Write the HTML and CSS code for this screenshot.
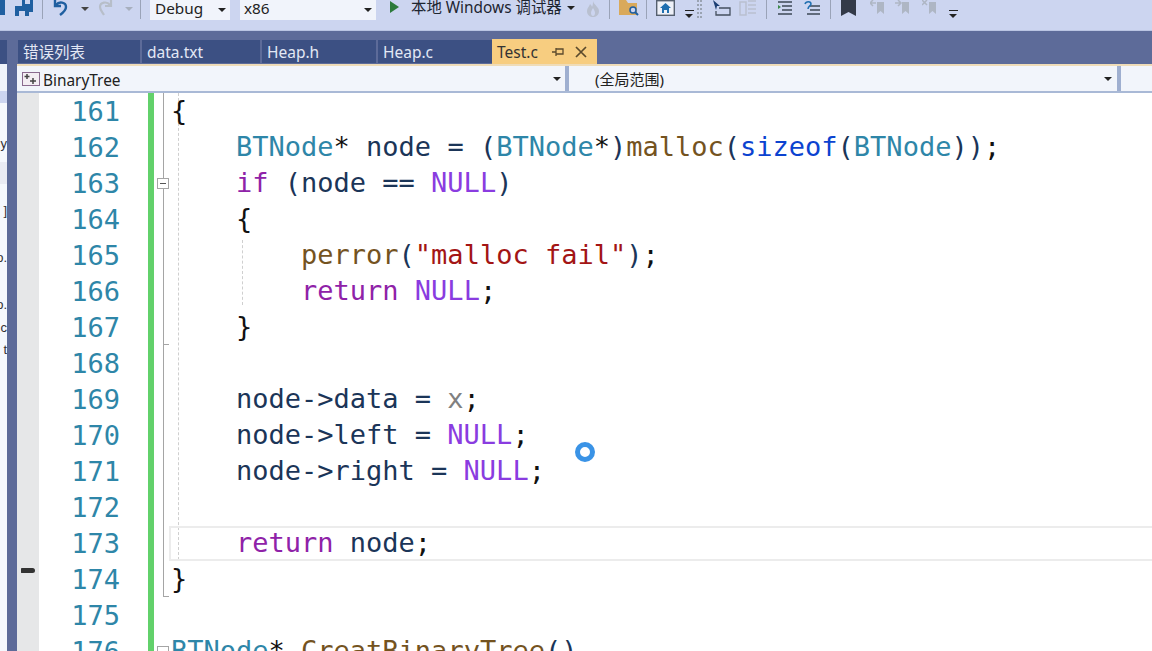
FILE: index.html
```html
<!DOCTYPE html>
<html lang="zh">
<head>
<meta charset="utf-8">
<title>Test.c</title>
<link rel="stylesheet" href="styles.css">
</head>
<body>
<header class="toolbar">
  <svg class="ico save" width="34" height="17" viewBox="0 0 34 17"><path d="M0 0h5v15H0z" fill="#1f5fa0"/><path d="M22 0h11v12H22z" fill="#1f5fa0"/><rect x="25" y="0" width="5" height="4" fill="#ccd5f0"/><path d="M15 6h14v10H15z" fill="#1f5fa0"/><rect x="19" y="11" width="6" height="5" fill="#ccd5f0"/></svg>
  <i class="sep s1"></i>
  <svg class="ico undo" width="16" height="16" viewBox="0 0 16 16"><path d="M2 0v6h6M3 5c3-4 10-3 10 2 0 3-2 5-6 8" fill="none" stroke="#1f5fa0" stroke-width="2.400"/></svg>
  <i class="arrow a-undo"></i>
  <svg class="ico redo" width="16" height="16" viewBox="0 0 16 16"><path d="M14 0v6H8M13 5C10 1 3 2 3 7c0 3 2 5 4 8" fill="none" stroke="#b7bec9" stroke-width="2.200"/></svg>
  <i class="arrow off a-redo"></i>
  <i class="sep s2"></i>
  <div class="combo debug"><span>Debug</span><i class="arrow"></i></div>
  <div class="combo x86"><span>x86</span><i class="arrow"></i></div>
  <i class="play"></i>
  <span class="run">本地 Windows 调试器</span>
  <i class="arrow a-run"></i>
  <svg class="ico flame" width="14" height="16" viewBox="0 0 14 16"><path d="M7 0c1 4 6 6 6 10 0 4-3 6-6 6s-6-2-6-6c0-3 2-4 3-7 1 1 2 2 2 3 1-2 1-4 1-6z" fill="#b9c0d0"/><path d="M7 7c1 2 2 3 2 5s-1 3-2 3-2-1-2-3 1-3 2-5z" fill="#ccd5f0"/></svg>
  <i class="sep s3"></i>
  <svg class="ico folder" width="20" height="16" viewBox="0 0 20 16"><path d="M0 0h7l2 3h9v12H0z" fill="#d9a95b"/><circle cx="14" cy="10" r="3" fill="#ccd5f0" stroke="#1f5fa0" stroke-width="1.500"/><path d="M16 12l3 3" stroke="#1f5fa0" stroke-width="2"/></svg>
  <i class="sep s4"></i>
  <svg class="ico home" width="19" height="16" viewBox="0 0 19 16"><rect x=".7" y=".7" width="17.600" height="14.600" fill="#eef1f8" stroke="#55606f" stroke-width="1.400"/><path d="M9.500 3L4 8h2v5h7V8h2z" fill="#1f6fb0"/><rect x="8" y="10" width="3" height="3" fill="#eef1f8"/></svg>
  <i class="more m1"></i>
  <svg class="ico grip" width="8" height="19" viewBox="0 0 8 19"><path d="M1 1h6M1 5h6M1 9h6M1 13h6M1 17h6" stroke="#9aa3b2" stroke-width="2" stroke-dasharray="2 1"/></svg>
  <svg class="ico cursor" width="18" height="16" viewBox="0 0 18 16"><path d="M0 0l7 6H4l-1 4z" fill="#1d3f73"/><path d="M6 8h11v7H3v-4" fill="none" stroke="#444f5e" stroke-width="1.300"/></svg>
  <svg class="ico faded" width="18" height="16" viewBox="0 0 18 16"><path d="M1 2h6v13H1zM9 1h8M9 5h8M9 9h8M9 13h8" fill="none" stroke="#b9c0cf" stroke-width="1.500"/></svg>
  <i class="sep s5"></i>
  <svg class="ico lines" width="14" height="14" viewBox="0 0 14 14"><path d="M0 1h14M4 5h10M4 9h10M0 13h14" stroke="#3d4856" stroke-width="1.500"/><path d="M0 4l3 2-3 2z" fill="#3c8a4b"/></svg>
  <svg class="ico lines2" width="16" height="15" viewBox="0 0 16 15"><path d="M6 5h10M6 9h10M3 13h13" stroke="#3d4856" stroke-width="1.500"/><path d="M1 3c1-3 6-3 6 0 0 2-3 2-3 5" fill="none" stroke="#1f6fb0" stroke-width="1.500"/></svg>
  <i class="sep s6"></i>
  <svg class="ico mark" width="15" height="16" viewBox="0 0 15 16"><path d="M0 0h15v16l-7.500-4L0 16z" fill="#333a48"/></svg>
  <svg class="ico m2" width="15" height="15" viewBox="0 0 15 15"><path d="M7 2h7v12l-3.500-3L7 14z" fill="#aeb6c4"/><path d="M6 3H1M3 0L0 3l3 3" fill="none" stroke="#aeb6c4" stroke-width="1.500"/></svg>
  <svg class="ico m3" width="15" height="15" viewBox="0 0 15 15"><path d="M7 2h7v12l-3.500-3L7 14z" fill="#aeb6c4"/><path d="M0 3h5M3 0l3 3-3 3" fill="none" stroke="#aeb6c4" stroke-width="1.500"/></svg>
  <svg class="ico m4" width="15" height="15" viewBox="0 0 15 15"><path d="M7 2h7v12l-3.500-3L7 14z" fill="#aeb6c4"/><path d="M0 0l5 5M5 0L0 5" fill="none" stroke="#aeb6c4" stroke-width="1.500"/></svg>
  <i class="more m5"></i>
</header>
<div class="workspace">
  <aside class="side">
    <div class="side-tab"></div>
    <div class="side-body">
      <i class="side-head"></i>
      <i class="side-combo"></i>
      <i class="side-band"></i>
      <span class="c2">y</span><span class="c3">]</span><span class="c4">o.</span><span class="c5">o.</span><span class="c6">c</span><span class="c7">t</span>
    </div>
  </aside>
  <main class="doc">
    <nav class="tabs">
      <div class="tab t1">错误列表</div>
      <div class="tab t2">data.txt</div>
      <div class="tab t3">Heap.h</div>
      <div class="tab t4">Heap.c</div>
      <div class="tab active"><span>Test.c</span>
        <svg class="pin" width="12" height="10" viewBox="0 0 12 10"><path d="M0 5h4M4 1v8M4 2h7v5H4" fill="none" stroke="#5b4a2c" stroke-width="1.300"/></svg>
        <svg class="close" width="12" height="12" viewBox="0 0 12 12"><path d="M1 1l10 10M11 1L1 11" stroke="#5b4a2c" stroke-width="1.700"/></svg>
      </div>
    </nav>
    <div class="navbar">
      <div class="nav-a">
        <svg width="18" height="14" viewBox="0 0 18 14"><rect x=".5" y=".5" width="17" height="13" fill="#f3edf3" stroke="#8a6a8f"/><path d="M5 2v5M2.500 4.500h5M11 6v6M8 9h6" stroke="#444" stroke-width="1.500"/></svg>
        <span class="nav-label">BinaryTree</span><i class="arrow"></i>
      </div>
      <i class="nav-div"></i>
      <div class="nav-b"><span>(全局范围)</span><i class="arrow"></i></div>
      <i class="nav-div"></i>
    </div>
    <div class="editor">
      <div class="marks"><i class="caret-mark"></i></div>
      <div class="nums">
        <div>161</div><div>162</div><div>163</div><div>164</div><div>165</div><div>166</div><div>167</div><div>168</div><div>169</div><div>170</div><div>171</div><div>172</div><div>173</div><div>174</div><div>175</div><div>176</div>
      </div>
      <div class="change"></div>
      <div class="code">
        <i class="outline"></i>
        <i class="tick k1"></i><i class="tick k2nd"></i>
        <i class="fold f1"></i><i class="fold f2"></i>
        <i class="guide g1"></i><i class="guide g2"></i>
        <i class="current"></i>
<pre><span class="p">{</span>
    <span class="t">BTNode</span><span class="p">*</span> node = (<span class="t">BTNode</span><span class="p">*</span>)<span class="f">malloc</span>(<span class="k2">sizeof</span>(<span class="t">BTNode</span>))<span class="p">;</span>
    <span class="k">if</span> (node == <span class="m">NULL</span>)
    <span class="p">{</span>
        <span class="f">perror</span>(<span class="s">"malloc fail"</span>)<span class="p">;</span>
        <span class="k">return</span> <span class="m">NULL</span><span class="p">;</span>
    <span class="p">}</span>

    node-&gt;data = <span class="g">x</span><span class="p">;</span>
    node-&gt;left = <span class="m">NULL</span><span class="p">;</span>
    node-&gt;right = <span class="m">NULL</span><span class="p">;</span>

    <span class="k">return</span> node<span class="p">;</span>
<span class="p">}</span>

<span class="t">BTNode</span><span class="p">*</span> <span class="f">CreatBinaryTree</span>()</pre>
      </div>
      <i class="spinner"></i>
    </div>
  </main>
</div>
</body>
</html>
```
FILE: styles.css
```css
* { box-sizing: border-box; }
html, body { margin: 0; height: 651px; overflow: hidden; }
body { width: 1152px; background: #5d6b99; font-family: "Noto Sans", "Noto Sans CJK SC", sans-serif; display: flex; flex-direction: column; }
i { display: block; flex: none; }
.toolbar { height: 31px; flex: none; background: #ccd5f0; display: flex; align-items: flex-start; overflow: hidden; box-shadow: inset 0 -1px 0 #b9c4e2; }
.ico { flex: none; }
.sep { width: 1px; height: 19px; background: #9aa3b8; }
.arrow { width: 0; height: 0; border: 4px solid transparent; border-top: 4px solid #222; border-bottom: 0; }
.arrow.off { border-top-color: #a7afbe; }
.s1 { margin-left: 8px; }
.undo { margin-left: 10px; }
.a-undo { margin: 7px 0 0 12px; border-top-color: #444; }
.redo { margin-left: 8px; }
.a-redo { margin: 7px 0 0 12px; }
.s2 { margin-left: 7px; }
.combo { height: 20px; background: #f1f4fb; display: flex; align-items: center; color: #222; font-size: 15.300px; }
.combo span { padding-bottom: 4px; }
.combo .arrow { margin-left: auto; }
.debug { width: 80px; margin-left: 9px; padding: 0 4px 0 5px; }
.x86 { width: 136px; margin-left: 10px; padding: 0 4px 0 4px; }
.play { width: 0; height: 0; margin: 1px 0 0 14px; border: 6px solid transparent; border-left: 9px solid #2c7a3b; border-right: 0; }
.run { width: 151px; flex: none; margin-left: 12px; font-size: 15.400px; line-height: 16px; color: #1e2530; white-space: nowrap; }
.a-run { margin: 6px 0 0 5px; }
.flame { margin: 1px 0 0 11px; }
.s3 { margin-left: 9px; }
.folder { margin-left: 9px; }
.s4 { margin-left: 7px; }
.home { margin-left: 9px; }
.more { width: 9px; height: 8px; margin: 10px 0 0 10px; border-top: 1px solid #222; position: relative; }
.more::after { content: ""; position: absolute; left: 0; top: 3px; border: 4.500px solid transparent; border-top: 4.500px solid #222; border-bottom: 0; }
.grip { margin-left: 2px; }
.cursor { margin-left: 9px; }
.faded { margin-left: 8px; }
.s5 { margin-left: 9px; }
.lines { margin: 1px 0 0 11px; }
.lines2 { margin: 1px 0 0 12px; }
.s6 { margin-left: 10px; }
.mark { margin-left: 10px; }
.m2 { margin-left: 14px; }
.m3 { margin-left: 10px; }
.m4 { margin-left: 12px; }
.m5 { margin: 10px 0 0 12px; }
.workspace { flex: 1; display: flex; min-height: 0; }
.side { width: 7px; flex: none; display: flex; flex-direction: column; }
.side-tab { height: 24px; margin: 9px 0 0; flex: none; background: #3c5083; }
.side-body { flex: 1; min-height: 0; background: #f5f8fd; position: relative; overflow: hidden; font: 13px/14px "Liberation Sans", sans-serif; color: #333; }
.side-body span { position: absolute; right: 0; white-space: nowrap; }
.side-head { height: 27px; background: #f0f3fa; }
.side-combo { height: 12px; background: #ccd5f0; }
.side-band { position: absolute; left: 0; right: 0; top: 98px; height: 22px; background: #e9ebf3; }
.c2 { top: 73px; }
.c3 { top: 140px; }
.c4 { top: 187px; }
.c5 { top: 234px; }
.c6 { top: 257px; }
.c7 { top: 279px; }
.doc { flex: 1; min-width: 0; margin-left: 10px; display: flex; flex-direction: column; }
.tabs { height: 33px; flex: none; padding: 8px 0 0 1px; display: flex; align-items: flex-end; font-size: 15.500px; color: #e3e8f5; }
.tab { height: 23px; margin-bottom: 1px; background: #3c5083; margin-right: 2px; padding: 0 5px; display: flex; align-items: center; line-height: 20px; white-space: nowrap; }
.t1 { width: 122px; }
.t2 { width: 118px; }
.t3 { width: 114px; }
.t4 { width: 114px; margin-right: 0; }
.tab.active { width: 105px; height: 25px; margin: 0; background: #f7cd80; color: #333; }
.pin { margin-left: 14px; }
.close { margin-left: 11px; }
.navbar { height: 29px; flex: none; display: flex; background: #f2f5fb; border-top: 2px solid #efdcb8; border-bottom: 2px solid #a9b9d6; font-size: 15.400px; color: #222; }
.nav-a, .nav-b { display: flex; align-items: center; }
.nav-a { width: 548px; padding: 0 4px 0 5px; gap: 3px; }
.nav-label { padding-top: 3px; }
.nav-b { width: 548px; padding: 0 5px 0 26px; font-size: 15px; }
.navbar .arrow { margin-left: auto; }
.nav-div { width: 4px; background: #9fafd0; }
.editor { flex: 1; min-height: 0; display: flex; background: #fff; position: relative; overflow: hidden; }
.marks { width: 22px; flex: none; background: #e6e7e8; position: relative; }
.caret-mark { position: absolute; left: 4px; top: 475px; width: 14px; height: 5px; border-radius: 1px 3px 3px 1px; background: #333; }
.nums { width: 109px; flex: none; padding: 1px 28px 0 0; text-align: right; color: #2e86a8; }
.nums, pre { font: 27px/36px "DejaVu Sans Mono", monospace; }
.change { width: 6px; flex: none; background: #62d16b; }
.code { flex: 1; min-width: 0; position: relative; padding: 0 0 0 17px; }
pre { margin: 0; color: #1b3558; position: relative; white-space: pre; }
.p { color: #111; }
.t { color: #2e86a8; }
.f { color: #74531f; }
.k { color: #8f22a8; }
.k2 { color: #0b43d0; }
.m { color: #8a3ce0; }
.s { color: #a31515; }
.g { color: #808080; }
.outline { position: absolute; left: 9px; top: 0; width: 1px; height: 503px; background: #a5a5a5; }
.tick { position: absolute; left: 9px; width: 6px; height: 1px; background: #a5a5a5; }
.k1 { top: 251px; }
.k2nd { top: 503px; }
.fold { position: absolute; left: 3px; width: 12px; height: 11px; border: 1px solid #a5a5a5; background: #fff; }
.fold::after { content: ""; position: absolute; left: 2px; top: 4px; width: 6px; height: 1px; background: #555; }
.f1 { top: 85px; }
.f2 { top: 553px; }
.guide { position: absolute; width: 0; border-left: 1px dashed #cfcfcf; }
.g1 { left: 24px; top: 0; height: 467px; }
.g2 { left: 88px; top: 147px; height: 65px; }
.current { position: absolute; left: 15px; right: 0; top: 433px; height: 35px; border: 2px solid #ececec; border-right: 0; }
.spinner { position: absolute; left: 558px; top: 349px; width: 20px; height: 20px; border: 5px solid #3a93e6; border-radius: 50%; background: #fff; filter: blur(.4px); }
```
